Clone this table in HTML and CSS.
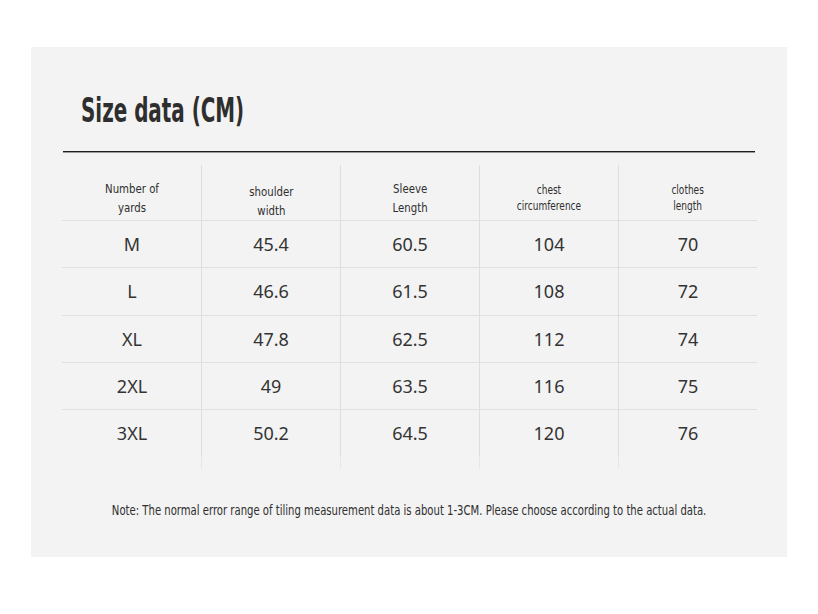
FILE: index.html
```html
<!DOCTYPE html>
<html lang="en">
<head>
<meta charset="utf-8">
<title>Size data (CM)</title>
<link rel="stylesheet" href="styles.css">
</head>
<body>
<div class="panel">
  <h1 class="title"><span class="squeeze-title">Size data (CM)</span></h1>
  <div class="rule"></div>
  <div class="table">
    <div class="row head">
      <div class="cell"><span class="hd">Number of<br>yards</span></div>
      <div class="cell low"><span class="hd">shoulder<br>width</span></div>
      <div class="cell"><span class="hd">Sleeve<br>Length</span></div>
      <div class="cell small-cell"><span class="hd small">chest<br>circumference</span></div>
      <div class="cell small-cell"><span class="hd small">clothes<br>length</span></div>
    </div>
    <div class="row body">
      <div class="cell">M</div><div class="cell">45.4</div><div class="cell">60.5</div><div class="cell">104</div><div class="cell">70</div>
    </div>
    <div class="row body">
      <div class="cell">L</div><div class="cell">46.6</div><div class="cell">61.5</div><div class="cell">108</div><div class="cell">72</div>
    </div>
    <div class="row body">
      <div class="cell">XL</div><div class="cell">47.8</div><div class="cell">62.5</div><div class="cell">112</div><div class="cell">74</div>
    </div>
    <div class="row body">
      <div class="cell">2XL</div><div class="cell">49</div><div class="cell">63.5</div><div class="cell">116</div><div class="cell">75</div>
    </div>
    <div class="row body">
      <div class="cell">3XL</div><div class="cell">50.2</div><div class="cell">64.5</div><div class="cell">120</div><div class="cell">76</div>
    </div>
    <div class="row tail">
      <div class="cell"></div><div class="cell"></div><div class="cell"></div><div class="cell"></div><div class="cell"></div>
    </div>
  </div>
  <p class="note"><span class="squeeze-note">Note: The normal error range of tiling measurement data is about 1-3CM. Please choose according to the actual data.</span></p>
</div>
</body>
</html>
```

FILE: styles.css
```css
html, body {
  margin: 0;
  padding: 0;
  background: #ffffff;
}

.panel {
  margin: 47px 0 0 31px;
  width: 756px;
  height: 510px;
  background: #f3f3f3;
  box-sizing: border-box;
  padding-top: 44px;
  overflow: hidden;
}

.title {
  margin: 0;
  padding-left: 50px;
  font-family: "DejaVu Sans Condensed", "DejaVu Sans", sans-serif;
  font-weight: bold;
  font-size: 33px;
  line-height: 40px;
  color: #2e2e2e;
  white-space: nowrap;
}

.squeeze-title {
  display: inline-block;
  transform: scaleX(0.67);
  transform-origin: left center;
}

.rule {
  margin: 20px 0 0 32px;
  width: 692px;
  height: 0;
  border-top: 1px solid #1e1e1e;
  box-shadow: 0 1px 0 #9a9a9a;
}

.table {
  margin: 13px 0 0 31px;
  width: 695px;
}

.row {
  display: grid;
  grid-template-columns: repeat(5, 1fr);
}

.cell {
  display: flex;
  align-items: center;
  justify-content: center;
  border-left: 1px solid #dedede;
}

.cell:first-child {
  border-left-color: transparent;
}

.head {
  height: 55px;
}

.head .cell {
  align-items: flex-start;
  padding-top: 14px;
}

.head .cell.low {
  padding-top: 17px;
}

.head .cell.small-cell {
  padding-top: 17px;
}

.hd {
  display: inline-block;
  font-family: "DejaVu Sans Condensed", "DejaVu Sans", sans-serif;
  font-size: 13px;
  line-height: 19px;
  color: #2f2f2f;
  text-align: center;
  white-space: nowrap;
  transform: scaleX(0.87);
}

.hd.small {
  font-size: 11.5px;
  line-height: 16px;
}

.body {
  height: 47.25px;
  box-sizing: border-box;
  border-top: 1px solid #e0e0e0;
}

.body .cell {
  font-family: "Noto Sans", "Open Sans", sans-serif;
  font-size: 18px;
  color: #333333;
}

.tail {
  height: 12px;
}

.tail .cell {
  border-left-color: #e6e6e6;
}

.tail .cell:first-child {
  border-left-color: transparent;
}

.note {
  margin: 33px 0 0 0;
  text-align: center;
  font-family: "DejaVu Sans Condensed", "DejaVu Sans", sans-serif;
  font-size: 13.5px;
  line-height: 18px;
  color: #2f2f2f;
  white-space: nowrap;
}

.squeeze-note {
  display: inline-block;
  transform: scaleX(0.83);
}
```
